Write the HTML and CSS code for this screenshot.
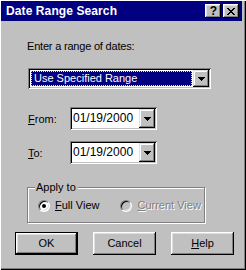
FILE: index.html
```html
<!DOCTYPE html>
<html>
<head>
<meta charset="utf-8">
<link rel="stylesheet" href="styles.css">
</head>
<body>
<div class="window">
  <div class="titlebar">
    <span class="title">Date Range Search</span>
    <div class="caption-btns">
      <span class="cbtn cbtn-help">?</span>
      <span class="cbtn cbtn-close">
        <svg width="8" height="7" viewBox="0 0 8 7" shape-rendering="crispEdges">
          <path d="M0 0h2v1H0zM6 0h2v1H6zM1 1h2v1H1zM5 1h2v1H5zM2 2h4v1H2zM3 3h2v1H3zM2 4h4v1H2zM1 5h2v1H1zM5 5h2v1H5zM0 6h2v1H0zM6 6h2v1H6z" fill="#000"/>
        </svg>
      </span>
    </div>
  </div>
  <div class="content">
    <div class="prompt">Enter a range of dates:</div>
    <div class="combo">
      <div class="combo-field"><span class="combo-sel">Use Specified Range</span></div>
      <span class="dropbtn">
        <svg width="7" height="4" viewBox="0 0 7 4" shape-rendering="crispEdges"><path d="M0 0h7v1H0zM1 1h5v1H1zM2 2h3v1H2zM3 3h1v1H3z" fill="#000"/></svg>
      </span>
    </div>
    <div class="daterow daterow-from">
      <span class="label"><u>F</u>rom:</span>
      <div class="datebox">
        <span class="dateval">01/19/2000</span>
        <span class="dropbtn">
          <svg width="7" height="4" viewBox="0 0 7 4" shape-rendering="crispEdges"><path d="M0 0h7v1H0zM1 1h5v1H1zM2 2h3v1H2zM3 3h1v1H3z" fill="#000"/></svg>
        </span>
      </div>
    </div>
    <div class="daterow daterow-to">
      <span class="label"><u>T</u>o:</span>
      <div class="datebox">
        <span class="dateval">01/19/2000</span>
        <span class="dropbtn">
          <svg width="7" height="4" viewBox="0 0 7 4" shape-rendering="crispEdges"><path d="M0 0h7v1H0zM1 1h5v1H1zM2 2h3v1H2zM3 3h1v1H3z" fill="#000"/></svg>
        </span>
      </div>
    </div>
    <div class="group">
      <div class="legend">Apply to</div>
      <div class="radios">
        <div class="radio">
          <span class="rb rb-checked"></span>
          <span class="rlabel"><u>F</u>ull View</span>
        </div>
        <div class="radio radio-disabled">
          <span class="rb rb-disabled"></span>
          <span class="rlabel"><u>C</u>urrent View</span>
        </div>
      </div>
    </div>
    <div class="buttons">
      <div class="btn btn-default"><span>OK</span></div>
      <div class="btn"><span>Cancel</span></div>
      <div class="btn"><span><u>H</u>elp</span></div>
    </div>
  </div>
</div>
</body>
</html>
```
FILE: styles.css
```css
html, body {
  margin: 0;
  padding: 0;
  background: #c0c0c0;
}
body {
  font-family: "Liberation Sans", Arial, sans-serif;
  font-size: 11px;
  color: #000;
}
u { text-decoration: underline; text-underline-offset: 1px; }
.window {
  width: 246px;
  height: 270px;
  box-sizing: border-box;
  background: #c0c0c0;
  padding: 1px 4px 0 1px;
  box-shadow: inset 1px 1px #fff, inset -1px -1px #000, inset -2px -2px #808080;
  overflow: hidden;
}
.titlebar {
  height: 20px;
  background: #000080;
  display: flex;
  align-items: center;
  justify-content: space-between;
  padding: 0 3px 0 5px;
}
.title {
  color: #fff;
  font-weight: bold;
  font-size: 12px;
  letter-spacing: 0.1px;
}
.caption-btns {
  display: flex;
  gap: 2px;
}
.cbtn {
  width: 16px;
  height: 14px;
  background: #c0c0c0;
  box-shadow: inset -1px -1px #000, inset 1px 1px #fff, inset -2px -2px #808080, inset 2px 2px #dfdfdf;
  display: flex;
  align-items: center;
  justify-content: center;
  box-sizing: border-box;
}
.cbtn-help {
  font-weight: bold;
  font-size: 12px;
  line-height: 14px;
  padding-left: 1px;
}
.cbtn-close svg { display: block; margin-left: 0; }
.content {
  display: flex;
  flex-direction: column;
  padding-left: 25px;
}
.prompt {
  margin-top: 19px;
  line-height: 13px;
  letter-spacing: -0.2px;
  margin-left: 1px;
}
.combo {
  margin-top: 15px;
  margin-left: 2px;
  width: 183px;
  height: 21px;
  box-sizing: border-box;
  background: #fff;
  box-shadow: inset 1px 1px #808080, inset -1px -1px #fff, inset 2px 2px #000, inset -2px -2px #c0c0c0;
  display: flex;
  align-items: stretch;
  padding: 2px;
}
.combo-field {
  flex: 1;
  padding: 1px;
  display: flex;
}
.combo-sel {
  flex: 1;
  background: #000080;
  color: #fff;
  outline: 1px dotted #ffff00;
  outline-offset: -1px;
  line-height: 15px;
  padding-left: 3px;
}
.dropbtn {
  width: 16px;
  background: #c0c0c0;
  box-shadow: inset -1px -1px #000, inset 1px 1px #dfdfdf, inset -2px -2px #808080, inset 2px 2px #fff;
  display: flex;
  align-items: center;
  justify-content: center;
  box-sizing: border-box;
}
.dropbtn svg { display: block; }
.daterow {
  display: flex;
  align-items: center;
  margin-left: 2px;
}
.daterow-from { margin-top: 18px; }
.daterow-to { margin-top: 11px; }
.label {
  width: 42px;
}
.datebox {
  width: 87px;
  height: 23px;
  box-sizing: border-box;
  background: #fff;
  box-shadow: inset 1px 1px #808080, inset -1px -1px #fff, inset 2px 2px #000, inset -2px -2px #c0c0c0;
  padding: 2px;
  display: flex;
}
.dateval {
  flex: 1;
  font-size: 12px;
  line-height: 19px;
  padding-left: 1px;
}
.group {
  margin-top: 23px;
  margin-left: 1px;
  width: 178px;
  height: 36px;
  box-sizing: border-box;
  border: 1px solid #808080;
  border-right-color: #808080;
  box-shadow: inset 1px 1px #fff, 1px 1px #fff;
  display: flex;
  flex-direction: column;
}
.legend {
  align-self: flex-start;
  margin-top: -7px;
  margin-left: 7px;
  padding: 0 2px 0 1px;
  background: #c0c0c0;
  line-height: 13px;
}
.radios {
  display: flex;
  margin-top: 5px;
  padding-left: 10px;
}
.radio {
  display: flex;
  align-items: center;
  gap: 5px;
}
.radio-disabled {
  margin-left: 21px;
  color: #808080;
  text-shadow: 1px 1px #fff;
}
.rb {
  width: 12px;
  height: 12px;
  box-sizing: border-box;
  border-radius: 50%;
  border: 1px solid;
  border-color: #808080 #fff #fff #808080;
  background: #fff;
  box-shadow: inset 1px 1px #000, inset -1px -1px #dfdfdf;
  display: flex;
  align-items: center;
  justify-content: center;
}
.rb-checked::after {
  content: "";
  width: 4px;
  height: 4px;
  border-radius: 50%;
  background: #000;
}
.rb-disabled {
  background: #c0c0c0;
}
.rlabel { line-height: 13px; }
.buttons {
  display: flex;
  gap: 15px;
  margin-top: 9px;
  margin-left: -11px;
}
.btn {
  width: 63px;
  height: 23px;
  box-sizing: border-box;
  background: #c0c0c0;
  box-shadow: inset -1px -1px #000, inset 1px 1px #fff, inset -2px -2px #808080, inset 2px 2px #dfdfdf;
  display: flex;
  align-items: center;
  justify-content: center;
  line-height: 13px;
}
.btn-default {
  border: 1px solid #000;
  box-shadow: inset -1px -1px #000, inset 1px 1px #fff, inset -2px -2px #808080, inset 2px 2px #dfdfdf;
}
```
